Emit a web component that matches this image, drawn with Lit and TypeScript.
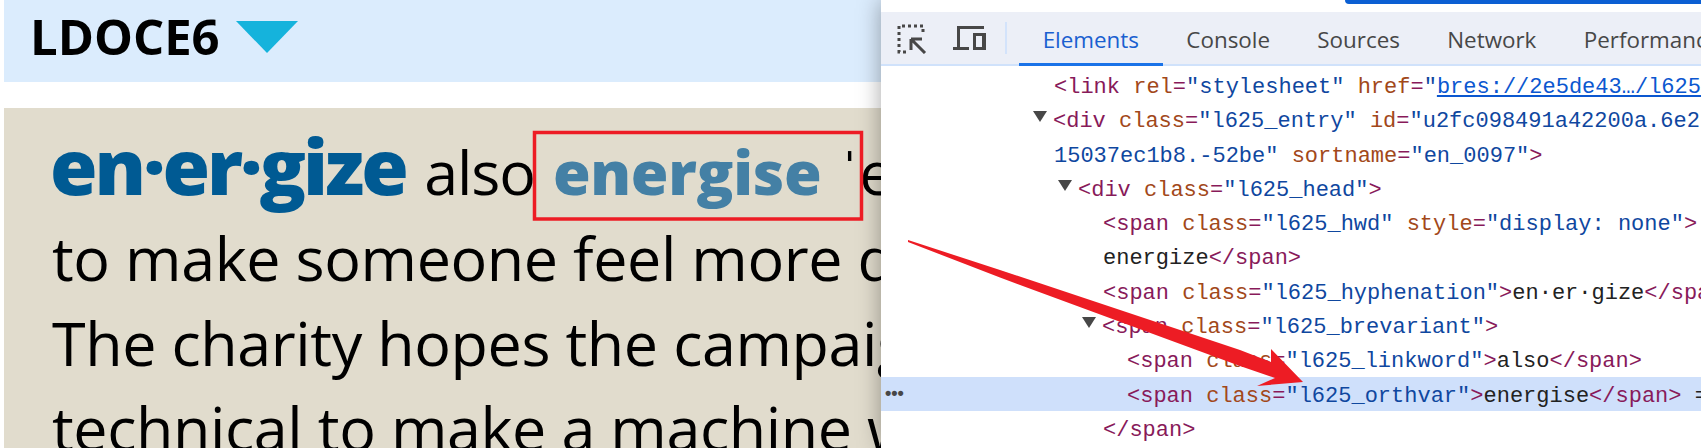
import { LitElement, html, css } from "lit";
import { customElement } from "lit/decorators.js";

const t = (s: string) => html`<span class="tag">${s}</span>`;
const a = (s: string) => html`<span class="attr">${s}</span>`;
const v = (s: string) => html`<span class="val">${s}</span>`;

@customElement("app-root")
export class AppRoot extends LitElement {
  static styles = css`
    :host { display: block; position: relative; width: 1701px; height: 448px; overflow: hidden; background: #fff; }
    .page { display: flex; width: 1701px; height: 448px; }
    .left { width: 881px; flex: none; padding-left: 4px; box-sizing: border-box; overflow: hidden; white-space: nowrap; }
    .head { height: 82px; background: #dbecfd; display: flex; align-items: center; padding-left: 26px; gap: 16px; }
    .brand { font: 700 49px "Open Sans", sans-serif; color: #000; line-height: 72px; margin-top: -10px; }
    .tri { width: 0; height: 0; border-left: 31.5px solid transparent; border-right: 31.5px solid transparent; border-top: 32px solid #15b3dc; margin-top: -9px; }
    .entry { margin-top: 26px; height: 340px; background: #e1dccd; padding-left: 48px; font: 400 61px "Open Sans", sans-serif; letter-spacing: -.4px; color: #000; overflow: hidden; }
    .l1 { height: 107px; line-height: 115px; }
    .l { height: 85px; line-height: 85px; }
    .hw { font-weight: 800; color: #005a93; font-size: 77px; letter-spacing: -3px; margin-left: -2px; margin-right: 3px; }
    .also { letter-spacing: -1.1px; }
    .ov { font-weight: 800; color: #4480a5; font-size: 61px; letter-spacing: -.3px; margin-left: 18px; margin-right: 18px; }
    .tools { flex: 1; min-width: 0; position: relative; background: #fff; box-shadow: 0 0 22px rgba(0,0,0,.35); overflow: hidden; }
    .topbar { height: 12px; position: relative; }
    .blue { position: absolute; left: 464px; right: 0; top: 0; height: 4px; background: #0b5fd3; border-bottom-left-radius: 6px; }
    .toolbar { height: 52px; background: #eceff7; border-bottom: 2px solid #d0e2fb; display: flex; align-items: stretch; padding-left: 16px; }
    .ic { margin-top: 12px; flex: none; display: block; }
    .ic2 { margin-left: 26px; margin-top: 14px; }
    .sep { width: 2px; background: #d3e3fb; margin: 10px 12px 10px 19px; flex: none; }
    .tab { font: 400 22.4px "Open Sans", sans-serif; padding: 3px 23.67px 0; color: #474747; line-height: 50px; white-space: nowrap; margin-bottom: -2px; border-bottom: 3px solid transparent; height: 48px; box-sizing: content-box; }
    .tab.on { color: #1a5fd0; border-bottom-color: #1a73e8; }
    .code { padding-top: 2px; }
    .row { height: 34.3px; font: 22px/40px "Liberation Mono", monospace; color: #222; white-space: pre; position: relative; overflow: hidden; }
    .row.sel { background: #cfe0fb; }
    .i0 { padding-left: 173px; }
    .i1 { padding-left: 198px; }
    .i2 { padding-left: 222px; }
    .i3 { padding-left: 246px; }
    .tw { display: inline-block; width: 0; height: 0; border-left: 7.5px solid transparent; border-right: 7.5px solid transparent; border-top: 11px solid #474747; margin-left: -21px; margin-right: 6px; vertical-align: 5px; }
    .tag { color: #881a5a; }
    .attr { color: #a2481a; }
    .val { color: #0f479f; }
    .lnk { color: #0b57d0; text-decoration: underline; }
    .dots { position: absolute; left: 4px; top: 4px; font: 700 18px/24px "Liberation Sans", sans-serif; color: #474747; }
    .overlay { position: absolute; left: 0; top: 0; width: 1701px; height: 448px; pointer-events: none; }
  `;

  render() {
    return html`
      <div class="page">
        <div class="left">
          <div class="head"><span class="brand">LDOCE6</span><span class="tri"></span></div>
          <div class="entry">
            <div class="l1"><span class="hw">en·er·gize</span> <span class="also">also</span><span class="ov">energise</span>ˈenədʒaɪz</div>
            <div class="l">to make someone feel more determined</div>
            <div class="l">The charity hopes the campaign will</div>
            <div class="l">technical to make a machine work</div>
          </div>
        </div>
        <div class="tools">
          <div class="topbar"><div class="blue"></div></div>
          <div class="toolbar">
            <svg class="ic" width="30" height="30" viewBox="0 0 30 30" fill="none" stroke="#474747">
              <path d="M26 8V2H2v26h8" stroke-width="3" stroke-dasharray="3 3"/>
              <path d="M14 15h11M14 15v11M14 15l14 14" stroke-width="3"/>
            </svg>
            <svg class="ic ic2" width="33" height="25" viewBox="0 0 33 25" fill="#474747">
              <path d="M4 0h27v3H7v18h9v3H0v-3h4z"/>
              <path fill-rule="evenodd" d="M20 7h13v17H20zM23 10v11h6V10z"/>
            </svg>
            <div class="sep"></div>
            <div class="tab on">Elements</div>
            <div class="tab">Console</div>
            <div class="tab">Sources</div>
            <div class="tab">Network</div>
            <div class="tab">Performance</div>
          </div>
          <div class="code">
            <div class="row i0">${t("<link")} ${a("rel")}${t("=")}${v('"stylesheet"')} ${a("href")}${t("=")}${v('"')}<span class="lnk">bres://2e5de43…/l625.css</span>${v('"')}${t(">")}</div>
            <div class="row i0"><span class="tw"></span>${t("<div")} ${a("class")}${t("=")}${v('"l625_entry"')} ${a("id")}${t("=")}${v('"u2fc098491a42200a.6e2')}</div>
            <div class="row i0">${v('15037ec1b8.-52be"')} ${a("sortname")}${t("=")}${v('"en_0097"')}${t(">")}</div>
            <div class="row i1"><span class="tw"></span>${t("<div")} ${a("class")}${t("=")}${v('"l625_head"')}${t(">")}</div>
            <div class="row i2">${t("<span")} ${a("class")}${t("=")}${v('"l625_hwd"')} ${a("style")}${t("=")}${v('"display: none"')}${t(">")}</div>
            <div class="row i2">energize${t("</span>")}</div>
            <div class="row i2">${t("<span")} ${a("class")}${t("=")}${v('"l625_hyphenation"')}${t(">")}en·er·gize${t("</span>")}</div>
            <div class="row i2"><span class="tw"></span>${t("<span")} ${a("class")}${t("=")}${v('"l625_brevariant"')}${t(">")}</div>
            <div class="row i3">${t("<span")} ${a("class")}${t("=")}${v('"l625_linkword"')}${t(">")}also${t("</span>")}</div>
            <div class="row i3 sel"><span class="dots">•••</span>${t("<span")} ${a("class")}${t("=")}${v('"l625_orthvar"')}${t(">")}energise${t("</span>")} == $0</div>
            <div class="row i2">${t("</span>")}</div>
          </div>
        </div>
      </div>
      <svg class="overlay" viewBox="0 0 1701 448">
        <rect x="534.5" y="132.5" width="327" height="86.5" fill="none" stroke="#ed1c24" stroke-width="3.5"/>
        <polygon points="908,240 1000,270 1240,350 1271,362 1271,349 1303,382 1257,386 1275,378 1240,366 1000,277.5 908,242" fill="#ed1c24"/>
      </svg>
    `;
  }
}
